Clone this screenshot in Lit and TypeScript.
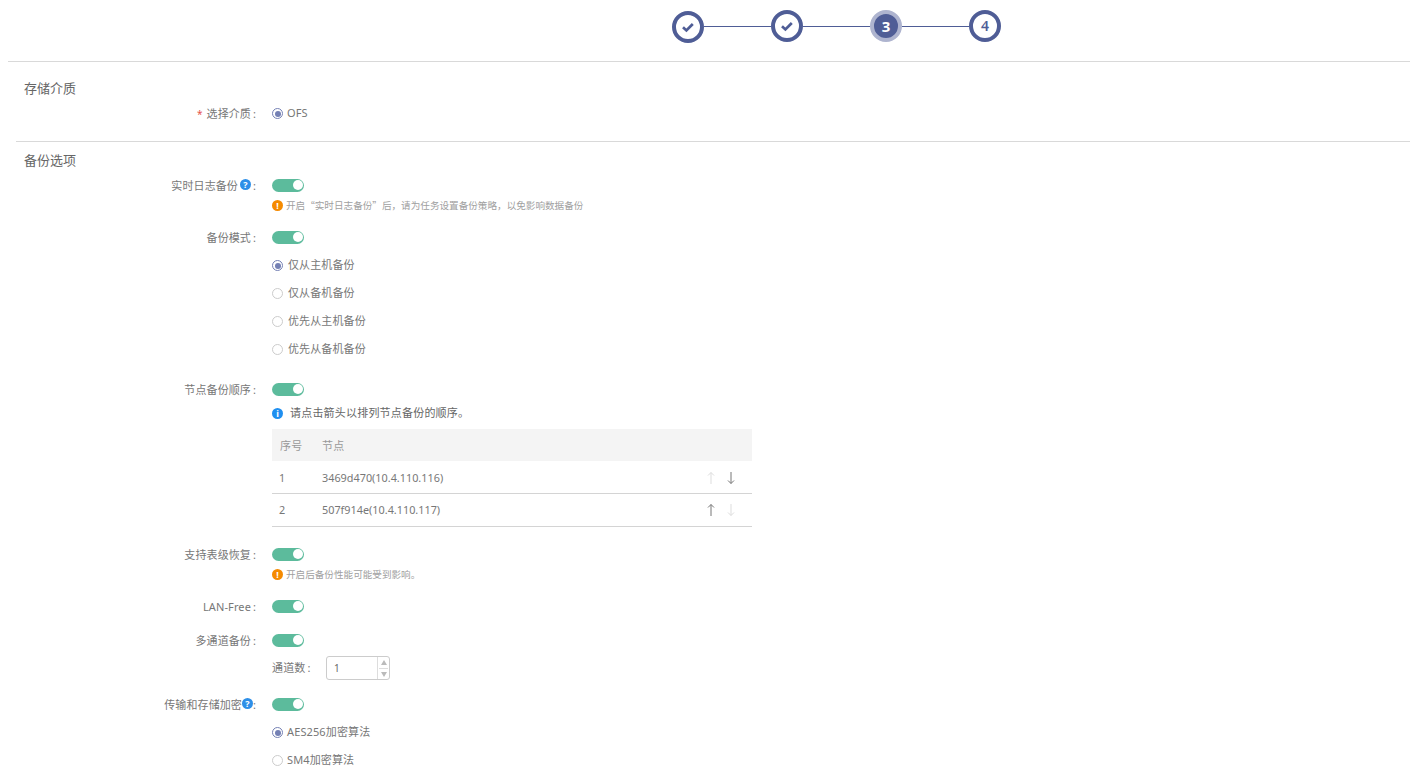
import { LitElement, html, css, svg } from "lit";
import { customElement } from "lit/decorators.js";

const check = svg`<path d="M7 12.2 L10.4 15.4 L16.8 9" fill="none" stroke="#4f5d96" stroke-width="2.7"/>`;

@customElement("app-root")
export class AppRoot extends LitElement {
  static styles = css`
    :host { display: block; width: 1410px; height: 782px; overflow: hidden; background: #fff;
      font-family: "Noto Sans", "Noto Sans CJK SC", sans-serif; font-size: 11px; color: #777; line-height: 16px; }
    .stepwrap { height: 61px; margin-left: 8px; border-bottom: 1px solid #d9d9d9; box-sizing: content-box; }
    .stepper { display: flex; align-items: center; height: 52px; padding-left: 664px; }
    .step { width: 32px; height: 32px; box-sizing: border-box; border: 4px solid #4f5d96; border-radius: 50%;
      display: flex; align-items: center; justify-content: center; color: #4f5d96; font-size: 14px; font-weight: 600; background: #fff; flex: none; }
    .step.first { margin-top: 2px; }
    .step svg { display: block; width: 24px; height: 24px; }
    .step.active { background: #4f5d96; border-color: #aeb4cf; color: #fff; font-size: 15px; font-weight: 700; }
    .line { width: 67px; height: 1px; background: #4f5d96; flex: none; }
    .title { font-size: 13px; color: #666; line-height: 18px; padding-left: 24px; }
    .t1 { margin-top: 17px; }
    .sep { height: 1px; background: #d9d9d9; margin-left: 16px; }
    .row { display: grid; grid-template-columns: 258px 1fr; column-gap: 14px; }
    .label { height: 16px; line-height: 18px; white-space: nowrap; display: flex; justify-content: flex-end; align-items: flex-start; letter-spacing: .1px; padding-right: 2px; box-sizing: border-box; }
    .colon { margin-left: 2px; }
    .req { color: #e5534b; margin-right: 4px; font-size: 10px; }
    .ctl { min-width: 0; }
    .radio { display: flex; align-items: flex-start; gap: 4px; height: 16px; line-height: 16px; letter-spacing: .12px; }
    .radio.cjk { gap: 5px; }
    .dot { width: 11px; height: 11px; border-radius: 50%; border: 1px solid #ccc; box-sizing: border-box; flex: none; background: #fff; margin-top: 3px; }
    .dot.on { border-color: #7480b4; position: relative; }
    .dot.on::after { content: ""; position: absolute; inset: 1.5px; border-radius: 50%; background: #7480b4; }
    .toggle { width: 32px; height: 13px; background: #5cbb9c; border-radius: 7px; position: relative; }
    .toggle::after { content: ""; position: absolute; right: 1.5px; top: 1.5px; width: 10px; height: 10px; background: #fff; border-radius: 50%; }
    .sw { height: 16px; display: flex; align-items: center; }
    .hint { display: flex; align-items: center; gap: 3px; font-family: "Noto Sans CJK SC", sans-serif; font-size: 9.6px; color: #a0a0a0; height: 16px; }
    .ico { width: 11px; height: 11px; border-radius: 50%; flex: none; color: #fff; font-family: "Noto Sans", sans-serif; font-size: 9px; font-weight: 700; line-height: 11px; text-align: center; letter-spacing: 0; }
    .label .ico { margin-top: 2px; }
    .warn { background: #f58a00; }
    .q { background: #2d8fe8; }
    .inf { background: #1f8ff0; }
    .m1 { margin-left: 2px; }
    .m2 { margin-right: -2px; }
    .info { display: flex; align-items: center; gap: 7px; height: 16px; font-size: 11px; color: #666; letter-spacing: .2px; }
    .table { width: 480px; margin-top: 8px; }
    .tr { display: grid; grid-template-columns: 43px 1fr 60px; align-items: center; padding-left: 7px; box-sizing: border-box; }
    .th { height: 32px; background: #f4f4f4; color: #999; padding-left: 8px; padding-top: 2px; grid-template-columns: 42px 1fr; letter-spacing: .15px; }
    .td { height: 33px; border-bottom: 1px solid #d4d4d4; font-size: 10.85px; padding-top: 2px; }
    .td.second { padding-top: 0; }
    .arrows { display: flex; gap: 10px; padding-left: 14px; margin-top: -1px; }
    .arrows svg { width: 10px; height: 14px; display: block; }
    .chan { display: flex; align-items: center; gap: 14px; height: 24px; letter-spacing: .15px; }
    .chan-label { width: 40px; white-space: nowrap; }
    .chan-label .colon { margin-left: 2px; }
    .num { width: 64px; height: 24px; box-sizing: border-box; border: 1px solid #ccc; border-radius: 3px; display: flex; align-items: stretch; font-size: 10px; color: #666; letter-spacing: 0; }
    .num .v { flex: 1; padding-left: 7px; line-height: 22px; }
    .spin { width: 11px; border-left: 1px solid #ddd; display: flex; flex-direction: column; align-items: center; justify-content: center; gap: 3px; }
    .up { width: 0; height: 0; border: 3px solid transparent; border-top: 0; border-bottom: 5px solid #bbb; }
    .down { width: 0; height: 0; border: 3px solid transparent; border-bottom: 0; border-top: 5px solid #bbb; }
    .spin hr { width: 9px; height: 1px; background: #ddd; border: 0; margin: 0; }
  `;

  private arrow(up: boolean, on: boolean) {
    const c = on ? "#777" : "#ddd";
    return html`<svg viewBox="0 0 10 14">${up
      ? svg`<path d="M5 13V1.5M2 4.5L5 1.5L8 4.5" fill="none" stroke=${c} stroke-width="1"/>`
      : svg`<path d="M5 1V12.5M2 9.5L5 12.5L8 9.5" fill="none" stroke=${c} stroke-width="1"/>`}</svg>`;
  }

  private radio(text: string, on: boolean, cjk = true) {
    return html`<div class="radio ${cjk ? "cjk" : ""}"><span class="dot ${on ? "on" : ""}"></span>${text}</div>`;
  }

  private toggleRow(label: unknown, top: number) {
    return html`<div class="row" style="margin-top:${top}px"><div class="label">${label}<span class="colon">:</span></div><div class="sw"><div class="toggle"></div></div></div>`;
  }

  private sub(content: unknown, top: number) {
    return html`<div class="row" style="margin-top:${top}px"><div></div><div class="ctl">${content}</div></div>`;
  }

  render() {
    return html`
      <div class="stepwrap">
        <div class="stepper">
          <div class="step first"><svg viewBox="0 0 24 24">${check}</svg></div><div class="line"></div>
          <div class="step"><svg viewBox="0 0 24 24">${check}</svg></div><div class="line"></div>
          <div class="step active">3</div><div class="line"></div>
          <div class="step">4</div>
        </div>
      </div>
      <div class="title t1">存储介质</div>
      <div class="row" style="margin-top:8px">
        <div class="label"><span class="req">*</span>选择介质<span class="colon">:</span></div>
        ${this.radio("OFS", true, false)}
      </div>
      <div class="sep" style="margin-top:20px"></div>
      <div class="title" style="margin-top:9px">备份选项</div>

      ${this.toggleRow(html`实时日志备份<span class="ico q m1">?</span>`, 8)}
      ${this.sub(html`<div class="hint"><span class="ico warn">!</span>开启“实时日志备份”后，请为任务设置备份策略，以免影响数据备份</div>`, 4)}

      ${this.toggleRow("备份模式", 16)}
      ${this.sub(this.radio("仅从主机备份", true), 12)}
      ${this.sub(this.radio("仅从备机备份", false), 12)}
      ${this.sub(this.radio("优先从主机备份", false), 12)}
      ${this.sub(this.radio("优先从备机备份", false), 12)}

      ${this.toggleRow("节点备份顺序", 24)}
      ${this.sub(html`
        <div class="info"><span class="ico inf">i</span>请点击箭头以排列节点备份的顺序。</div>
        <div class="table">
          <div class="tr th"><span>序号</span><span>节点</span></div>
          <div class="tr td"><span>1</span><span>3469d470(10.4.110.116)</span><div class="arrows">${this.arrow(true, false)}${this.arrow(false, true)}</div></div>
          <div class="tr td second"><span>2</span><span>507f914e(10.4.110.117)</span><div class="arrows">${this.arrow(true, true)}${this.arrow(false, false)}</div></div>
        </div>`, 8)}

      ${this.toggleRow("支持表级恢复", 19)}
      ${this.sub(html`<div class="hint"><span class="ico warn">!</span>开启后备份性能可能受到影响。</div>`, 4)}
      ${this.toggleRow("LAN-Free", 16)}
      ${this.toggleRow("多通道备份", 18)}
      ${this.sub(html`<div class="chan"><span class="chan-label">通道数<span class="colon">:</span></span><div class="num"><span class="v">1</span><span class="spin"><i class="up"></i><hr /><i class="down"></i></span></div></div>`, 8)}
      ${this.toggleRow(html`传输和存储加密<span class="ico q m2">?</span>`, 16)}
      ${this.sub(this.radio("AES256加密算法", true, false), 12)}
      ${this.sub(this.radio("SM4加密算法", false, false), 12)}
    `;
  }
}
